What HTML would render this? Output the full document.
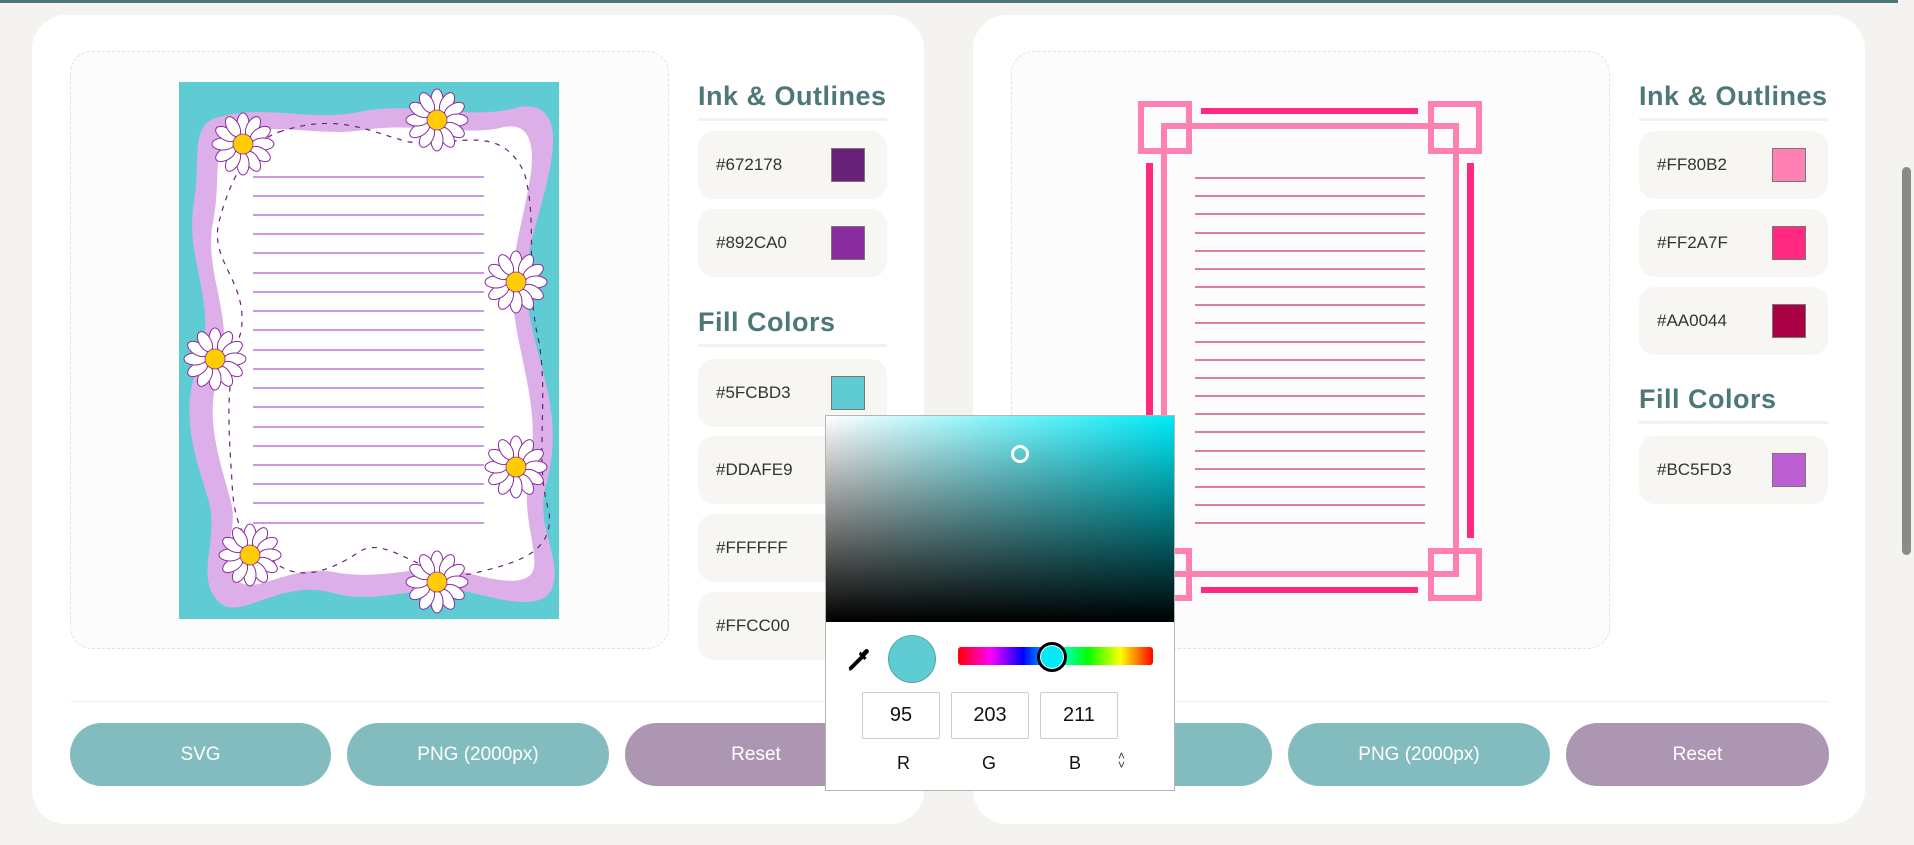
<!DOCTYPE html>
<html><head><meta charset="utf-8"><style>
*{box-sizing:border-box;margin:0;padding:0}
body{width:1914px;height:845px;overflow:hidden;background:#f4f3ef;font-family:"Liberation Sans","DejaVu Sans",sans-serif;position:relative}
.abs{position:absolute}
.topbar{left:0;top:0;width:1914px;height:3px;background:#4e7676}
.card{background:#fff;border-radius:34px;top:15px;height:809px;width:892px}
.prev{background:#fcfcfc;border:1px dashed #e2e2e2;border-radius:22px}
.h{font-size:27px;color:#4e7878;font-weight:bold;letter-spacing:0.5px;border-bottom:3px solid #edf4ee;padding-bottom:2px;width:189px;height:40px}
.row{width:189px;height:68px;background:#f7f6f2;border-radius:16px}
.row span{position:absolute;left:18px;top:24px;font-size:17px;color:#333}
.row i{position:absolute;left:133px;top:17px;width:34px;height:34px;border:1px solid #777}
.btn{height:63px;border-radius:32px;color:#fff;font-size:19px;text-align:center;line-height:63px}
.t{background:#82bcbe}.m{background:#ad96b2}
.div{height:1px;background:#f0f0f0}
.in{border:1px solid #ccc;border-radius:2px;width:78px;height:47px;text-align:center;line-height:45px;font-size:20px;color:#111}
.lb{font-size:18px;color:#111}
</style></head><body>
<div class="abs topbar"></div>
<div class="abs" style="left:1898px;top:0;width:16px;height:845px;background:#f4f3ef"></div>
<div class="abs" style="left:1902px;top:167px;width:9px;height:388px;background:#8a8a8a;border-radius:5px"></div>

<!-- LEFT CARD -->
<div class="abs card" style="left:32px"></div>
<div class="abs prev" style="left:70px;top:51px;width:599px;height:598px"></div>
<svg class="abs" style="left:179px;top:82px" width="380" height="537" viewBox="0 0 380 537">
<rect width="380" height="537" fill="#5fcbd3"/>
<path d="M40 35 C90 22 130 40 180 30 C240 18 290 40 340 25 C372 20 378 45 372 80 C362 140 340 170 350 230 C360 290 385 330 368 400 C355 440 380 470 375 500 C370 530 330 520 290 510 C240 500 200 525 150 510 C100 498 60 540 40 520 C15 495 40 460 30 420 C15 370 0 330 20 280 C40 220 5 180 15 120 C22 75 10 42 40 35Z" fill="#ddafe9"/>
<path d="M55 52 C100 40 140 55 185 48 C235 40 290 55 325 45 C352 40 355 65 352 90 C345 140 328 180 335 230 C342 285 362 330 350 390 C342 430 358 465 355 485 C352 505 320 500 285 490 C240 480 205 500 155 490 C110 482 75 515 58 498 C38 478 60 450 52 420 C40 375 25 335 40 290 C58 235 22 190 35 135 C42 95 32 60 55 52Z" fill="#fff"/>
<path d="M100 50 C160 30 190 50 230 60 C280 65 320 40 345 90 C360 140 345 200 360 260 C370 320 355 380 370 430 C375 470 340 480 300 490 C250 505 210 450 180 470 C150 490 120 500 95 480 C70 465 55 450 53 400 C50 350 45 300 62 250 C70 200 30 180 40 140 C50 100 70 60 100 50Z" fill="none" stroke="#672178" stroke-width="1.2" stroke-dasharray="5 6"/>
<g stroke="#b05ad3" stroke-width="1.2">
<line x1="74" y1="95" x2="305" y2="95"/><line x1="74" y1="114" x2="305" y2="114"/><line x1="74" y1="133" x2="305" y2="133"/><line x1="74" y1="152" x2="305" y2="152"/><line x1="74" y1="171" x2="305" y2="171"/><line x1="74" y1="191" x2="305" y2="191"/><line x1="74" y1="210" x2="305" y2="210"/><line x1="74" y1="229" x2="305" y2="229"/><line x1="74" y1="248" x2="305" y2="248"/><line x1="74" y1="268" x2="305" y2="268"/><line x1="74" y1="287" x2="305" y2="287"/><line x1="74" y1="306" x2="305" y2="306"/><line x1="74" y1="325" x2="305" y2="325"/><line x1="74" y1="345" x2="305" y2="345"/><line x1="74" y1="364" x2="305" y2="364"/><line x1="74" y1="383" x2="305" y2="383"/><line x1="74" y1="402" x2="305" y2="402"/><line x1="74" y1="421" x2="305" y2="421"/><line x1="74" y1="441" x2="305" y2="441"/>
</g>
<defs><g id="fl"><g fill="#fff" stroke="#892ca0" stroke-width="1">
<ellipse cx="0" cy="-20" rx="6" ry="11"/><ellipse cx="0" cy="-20" rx="6" ry="11" transform="rotate(30)"/><ellipse cx="0" cy="-20" rx="6" ry="11" transform="rotate(60)"/><ellipse cx="0" cy="-20" rx="6" ry="11" transform="rotate(90)"/><ellipse cx="0" cy="-20" rx="6" ry="11" transform="rotate(120)"/><ellipse cx="0" cy="-20" rx="6" ry="11" transform="rotate(150)"/><ellipse cx="0" cy="-20" rx="6" ry="11" transform="rotate(180)"/><ellipse cx="0" cy="-20" rx="6" ry="11" transform="rotate(210)"/><ellipse cx="0" cy="-20" rx="6" ry="11" transform="rotate(240)"/><ellipse cx="0" cy="-20" rx="6" ry="11" transform="rotate(270)"/><ellipse cx="0" cy="-20" rx="6" ry="11" transform="rotate(300)"/><ellipse cx="0" cy="-20" rx="6" ry="11" transform="rotate(330)"/></g>
<circle r="10" fill="#ffcc00" stroke="#892ca0" stroke-width="0.8"/></g></defs>
<use href="#fl" x="64" y="62"/><use href="#fl" x="258" y="38"/><use href="#fl" x="337" y="200"/><use href="#fl" x="36" y="277"/><use href="#fl" x="337" y="385"/><use href="#fl" x="71" y="473"/><use href="#fl" x="258" y="500"/>
</svg>
<div class="abs h" style="left:698px;top:81px">Ink &amp; Outlines</div>
<div class="abs row" style="left:698px;top:131px"><span>#672178</span><i style="background:#672178"></i></div>
<div class="abs row" style="left:698px;top:209px"><span>#892CA0</span><i style="background:#892ca0"></i></div>
<div class="abs h" style="left:698px;top:307px">Fill Colors</div>
<div class="abs row" style="left:698px;top:359px"><span>#5FCBD3</span><i style="background:#5fcbd3"></i></div>
<div class="abs row" style="left:698px;top:436px"><span>#DDAFE9</span></div>
<div class="abs row" style="left:698px;top:514px"><span>#FFFFFF</span></div>
<div class="abs row" style="left:698px;top:592px"><span>#FFCC00</span></div>
<div class="abs div" style="left:70px;top:701px;width:817px"></div>
<div class="abs btn t" style="left:70px;top:723px;width:261px">SVG</div>
<div class="abs btn t" style="left:347px;top:723px;width:262px">PNG (2000px)</div>
<div class="abs btn m" style="left:625px;top:723px;width:262px">Reset</div>

<!-- RIGHT CARD -->
<div class="abs card" style="left:973px"></div>
<div class="abs prev" style="left:1011px;top:51px;width:599px;height:598px"></div>
<svg class="abs" style="left:1130px;top:95px" width="360" height="515">
<g transform="translate(-1130,-95)">
<g fill="none" stroke="#ff80b2" stroke-width="6">
<rect x="1164" y="126" width="292" height="448"/>
<rect x="1141" y="104" width="48" height="47"/><rect x="1431" y="104" width="48" height="47"/>
<rect x="1141" y="551" width="48" height="47"/><rect x="1431" y="551" width="48" height="47"/>
</g>
<g fill="#ff2a7f">
<rect x="1201" y="108" width="217" height="6"/><rect x="1201" y="587" width="217" height="6"/>
<rect x="1146" y="163" width="7" height="375"/><rect x="1467" y="163" width="7" height="375"/>
</g>
<g stroke="#c8336e" stroke-width="1.3">
<line x1="1195" x2="1425" y1="178" y2="178"/><line x1="1195" x2="1425" y1="196" y2="196"/><line x1="1195" x2="1425" y1="214" y2="214"/><line x1="1195" x2="1425" y1="233" y2="233"/><line x1="1195" x2="1425" y1="251" y2="251"/><line x1="1195" x2="1425" y1="269" y2="269"/><line x1="1195" x2="1425" y1="287" y2="287"/><line x1="1195" x2="1425" y1="305" y2="305"/><line x1="1195" x2="1425" y1="323" y2="323"/><line x1="1195" x2="1425" y1="342" y2="342"/><line x1="1195" x2="1425" y1="360" y2="360"/><line x1="1195" x2="1425" y1="378" y2="378"/><line x1="1195" x2="1425" y1="396" y2="396"/><line x1="1195" x2="1425" y1="414" y2="414"/><line x1="1195" x2="1425" y1="432" y2="432"/><line x1="1195" x2="1425" y1="451" y2="451"/><line x1="1195" x2="1425" y1="469" y2="469"/><line x1="1195" x2="1425" y1="487" y2="487"/><line x1="1195" x2="1425" y1="505" y2="505"/><line x1="1195" x2="1425" y1="523" y2="523"/>
</g></g></svg>
<div class="abs h" style="left:1639px;top:81px">Ink &amp; Outlines</div>
<div class="abs row" style="left:1639px;top:131px"><span>#FF80B2</span><i style="background:#ff80b2"></i></div>
<div class="abs row" style="left:1639px;top:209px"><span>#FF2A7F</span><i style="background:#ff2a7f"></i></div>
<div class="abs row" style="left:1639px;top:287px"><span>#AA0044</span><i style="background:#aa0044"></i></div>
<div class="abs h" style="left:1639px;top:384px">Fill Colors</div>
<div class="abs row" style="left:1639px;top:436px"><span>#BC5FD3</span><i style="background:#bc5fd3"></i></div>
<div class="abs div" style="left:1011px;top:701px;width:818px"></div>
<div class="abs btn t" style="left:1008px;top:723px;width:264px">SVG</div>
<div class="abs btn t" style="left:1288px;top:723px;width:262px">PNG (2000px)</div>
<div class="abs btn m" style="left:1566px;top:723px;width:263px">Reset</div>

<!-- COLOR PICKER -->
<div class="abs" style="left:825px;top:415px;width:350px;height:376px;background:#fff;border:1px solid #b5b5b5">
 <div class="abs" style="left:0;top:0;width:348px;height:206px;background:linear-gradient(to top,#000,rgba(0,0,0,0)),linear-gradient(to right,#fff,#00eaf8)"></div>
 <div class="abs" style="left:185px;top:29px;width:18px;height:18px;border:3px solid #fff;border-radius:50%"></div>
 <svg class="abs" style="left:20px;top:231px" width="26" height="26" viewBox="0 0 24 24"><path d="M3 21 l2-1 L15 10 M5 20 L4 19 L14 9" stroke="#000" stroke-width="2.2" fill="none"/><path d="M12 7 l5 5 l2-2 l-1.5-1.5 l3-3 a2 2 0 0 0 -3-3 l-3 3 L13 4 Z" fill="#000"/></svg>
 <div class="abs" style="left:62px;top:219px;width:48px;height:48px;border-radius:50%;background:#5fcbd3;border:1px solid #4ea9b0"></div>
 <div class="abs" style="left:132px;top:231px;width:195px;height:18px;border-radius:3px;background:linear-gradient(to right,#f00,#f0f,#00f,#0ff,#0f0,#ff0,#f00)"></div>
 <div class="abs" style="left:211px;top:226px;width:30px;height:30px;border-radius:50%;background:#00eaf8;border:3px solid #000;box-shadow:0 0 0 1px #fff inset"></div>
 <div class="abs in" style="left:36px;top:276px">95</div>
 <div class="abs in" style="left:125px;top:276px">203</div>
 <div class="abs in" style="left:214px;top:276px">211</div>
 <div class="abs lb" style="left:71px;top:337px">R</div>
 <div class="abs lb" style="left:156px;top:337px">G</div>
 <div class="abs lb" style="left:243px;top:337px">B</div>
 <div class="abs" style="left:292px;top:336px;font-size:12px;line-height:9px;color:#333">˄<br>˅</div>
</div>
</body></html>
